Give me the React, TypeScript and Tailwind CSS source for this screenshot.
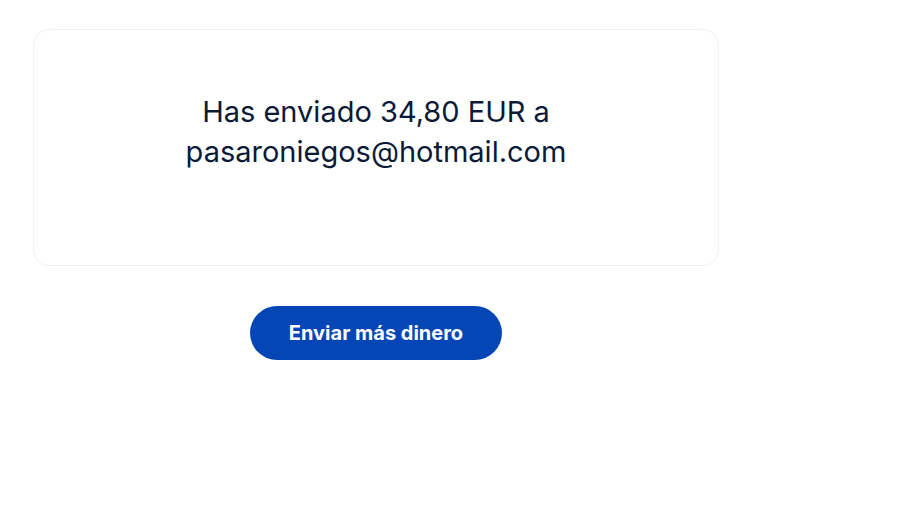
import React from 'react';

const App: React.FC = () => {
  return (
    <div className="min-h-screen bg-white pl-[33px] pt-[29px]" style={{ fontFamily: 'Inter, "Liberation Sans", sans-serif' }}>
      <div className="w-[686px] flex flex-col items-center">
        <div className="w-full h-[237px] rounded-2xl border border-[#f1f1f1] pt-[62px] flex justify-center">
          <p className="text-[29px] leading-[40px] text-[#0b1a36] text-center">
            Has enviado 34,80 EUR a
            <br />
            pasaroniegos@hotmail.com
          </p>
        </div>
        <button className="mt-[40px] w-[252px] h-[54px] rounded-full bg-[#0546b6] text-white text-[20px] font-bold">
          Enviar más dinero
        </button>
      </div>
    </div>
  );
};

export default App;
